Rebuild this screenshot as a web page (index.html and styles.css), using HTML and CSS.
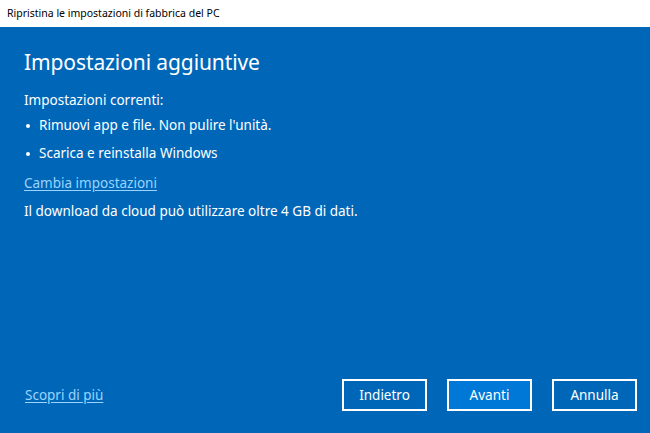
FILE: index.html
```html
<!DOCTYPE html>
<html lang="it">
<head>
  <meta charset="UTF-8" />
  <meta name="viewport" content="width=device-width, initial-scale=1.0"/>
  <title>Ripristina le impostazioni di fabbrica del PC</title>
  <link rel="stylesheet" href="styles.css">
</head>
<body>
  <div class="titlebar">Ripristina le impostazioni di fabbrica del PC</div>
  <div class="panel">
    <div class="content">
      <h1 class="heading">Impostazioni aggiuntive</h1>
      <p class="label">Impostazioni correnti:</p>
      <ul class="settings">
        <li>Rimuovi app e file. Non pulire l'unità.</li>
        <li>Scarica e reinstalla Windows</li>
      </ul>
      <a class="link" href="#">Cambia impostazioni</a>
      <p class="note">Il download da cloud può utilizzare oltre 4 GB di dati.</p>
    </div>
    <div class="footer">
      <a class="link" href="#">Scopri di più</a>
      <div class="actions">
        <button class="btn">Indietro</button>
        <button class="btn primary">Avanti</button>
        <button class="btn">Annulla</button>
      </div>
    </div>
  </div>
</body>
</html>
```

FILE: styles.css
```css
:root {
  --panel-bg: #0067b8;
  --accent: #0078d7;
  --link: #99d4ff;
  --text: #ffffff;
}

html, body {
  height: 100%;
}

body {
  margin: 0;
  font-family: "Noto Sans", "Open Sans", sans-serif;
  display: flex;
  flex-direction: column;
  background: var(--panel-bg);
  overflow: hidden;
}

.titlebar {
  height: 27px;
  background: #ffffff;
  color: #000;
  font-size: 10.5px;
  line-height: 26px;
  padding-left: 7px;
}

.panel {
  flex: 1;
  display: flex;
  flex-direction: column;
  justify-content: space-between;
  color: var(--text);
  padding: 0 13px 0 24px;
}

.heading {
  margin: 20px 0 0;
  font-weight: normal;
  font-size: 21px;
  line-height: 30px;
  letter-spacing: -0.1px;
}

.label {
  margin: 13px 0 0;
  font-size: 13.5px;
  line-height: 20px;
}

.settings {
  list-style: none;
  margin: 5px 0 0;
  padding: 0;
  font-size: 13.5px;
}

.settings li {
  line-height: 20px;
  margin-bottom: 8px;
  padding-left: 15px;
  position: relative;
}

.settings li::before {
  content: "";
  position: absolute;
  left: 2px;
  top: 9px;
  width: 4px;
  height: 4px;
  border-radius: 50%;
  background: var(--text);
}

.link {
  display: inline-block;
  color: var(--link);
  font-size: 13.5px;
  line-height: 20px;
  text-decoration: underline;
  text-underline-offset: 2px;
}

.content .link {
  margin-top: 1px;
}

.note {
  margin: 8px 0 0;
  font-size: 13.5px;
  line-height: 20px;
}

.footer {
  display: flex;
  justify-content: space-between;
  align-items: center;
  margin-bottom: 22px;
}

.footer .link {
  margin-left: 1px;
}

.actions {
  display: flex;
  gap: 20px;
}

.btn {
  width: 85px;
  height: 32px;
  background: transparent;
  border: 2px solid #ffffff;
  color: #fff;
  font-family: inherit;
  font-size: 13.5px;
  padding: 0;
  cursor: pointer;
}

.btn.primary {
  background: var(--accent);
}
```
